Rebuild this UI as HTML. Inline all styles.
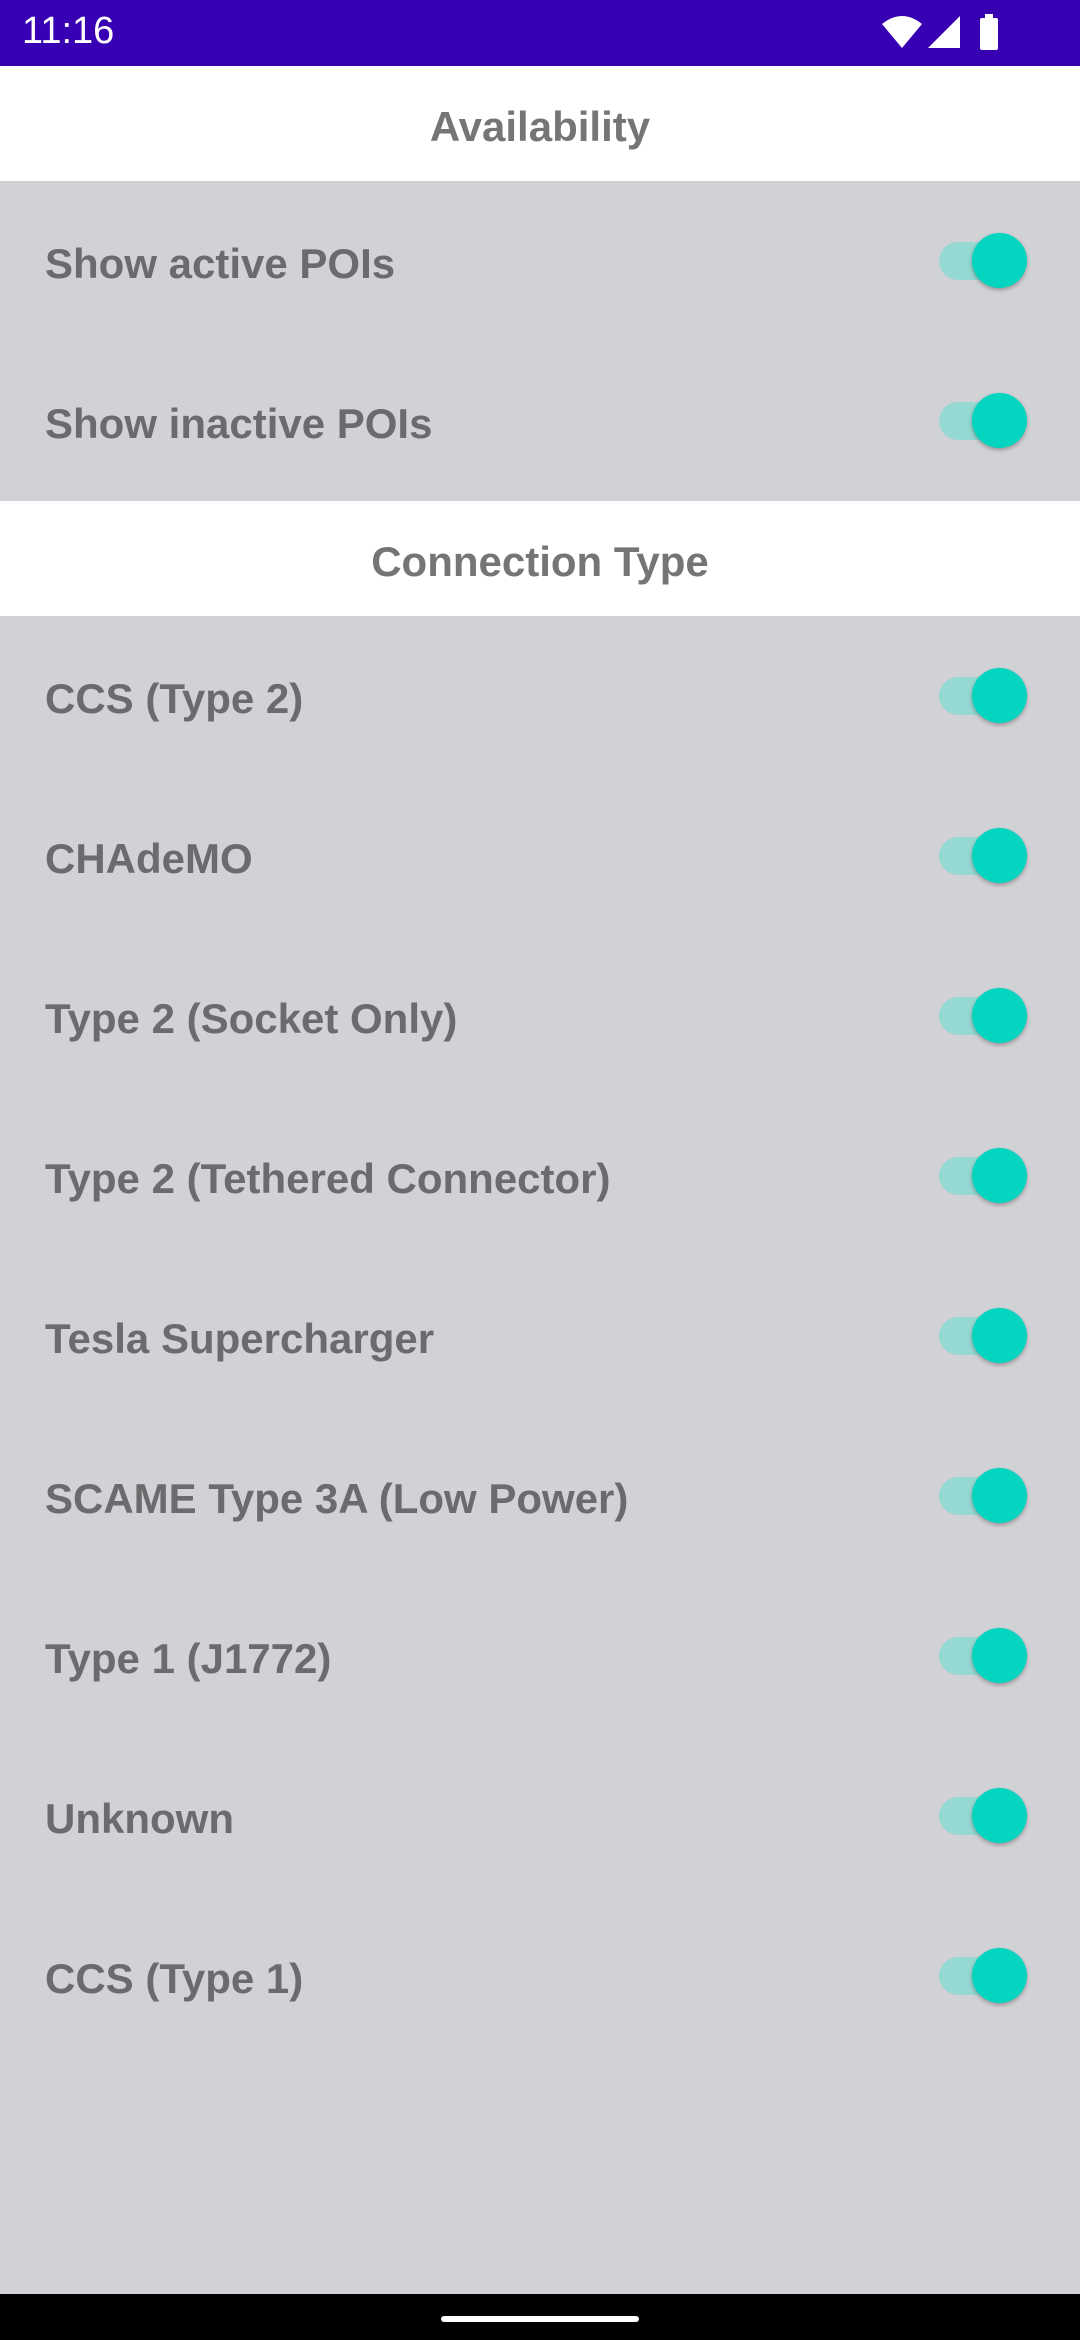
<!DOCTYPE html>
<html><head><meta charset="utf-8"><style>
*{margin:0;padding:0;box-sizing:border-box}
body{width:1080px;height:2340px;background:#d1d2d6;font-family:"Liberation Sans",Roboto,sans-serif;position:relative;overflow:hidden}
.sb{position:absolute;top:0;left:0;width:1080px;height:66px;background:#3700b3;color:#fff;font-size:38px}
.hdr{position:absolute;left:0;width:1080px;height:115px;background:#fff;color:#757575;font-weight:bold;font-size:42px;text-align:center;line-height:121px}
.row{position:absolute;left:0;width:1080px;height:160px}
.row span{position:absolute;left:45px;top:3px;line-height:160px;font-size:42px;font-weight:bold;color:#6b6b6d}
.tr{position:absolute;left:939px;top:61px;width:82px;height:38px;border-radius:19px;background:#96d8d2}
.th{position:absolute;left:972px;top:52px;width:55px;height:55px;border-radius:50%;background:#03d5c0;box-shadow:0 2px 4px rgba(0,0,0,.3)}
.nav{position:absolute;left:0;top:2294px;width:1080px;height:46px;background:#000}
.nav div{position:absolute;left:441px;top:22px;width:198px;height:6px;border-radius:3px;background:#fff}
</style></head><body>
<div class="sb"><span style="position:absolute;left:22px;top:10px">11:16</span>
<svg style="position:absolute;left:880px;top:14px" width="120" height="38" viewBox="0 0 120 38">
<path d="M2 10 Q22 -6 42 10 L22 34 Z" fill="#fff"/>
<path d="M48 34 L80 34 L80 2 Z" fill="#fff"/>
<rect x="100" y="4" width="18" height="32" rx="2" fill="#fff"/><rect x="105" y="0" width="8" height="5" fill="#fff"/>
</svg></div>
<div class="hdr" style="top:66px">Availability</div>
<div class="row" style="top:181px"><span>Show active POIs</span><div class="tr"></div><div class="th"></div></div>
<div class="row" style="top:341px"><span>Show inactive POIs</span><div class="tr"></div><div class="th"></div></div>
<div class="hdr" style="top:501px">Connection Type</div>
<div class="row" style="top:616px"><span>CCS (Type 2)</span><div class="tr"></div><div class="th"></div></div>
<div class="row" style="top:776px"><span>CHAdeMO</span><div class="tr"></div><div class="th"></div></div>
<div class="row" style="top:936px"><span>Type 2 (Socket Only)</span><div class="tr"></div><div class="th"></div></div>
<div class="row" style="top:1096px"><span>Type 2 (Tethered Connector)</span><div class="tr"></div><div class="th"></div></div>
<div class="row" style="top:1256px"><span>Tesla Supercharger</span><div class="tr"></div><div class="th"></div></div>
<div class="row" style="top:1416px"><span>SCAME Type 3A (Low Power)</span><div class="tr"></div><div class="th"></div></div>
<div class="row" style="top:1576px"><span>Type 1 (J1772)</span><div class="tr"></div><div class="th"></div></div>
<div class="row" style="top:1736px"><span>Unknown</span><div class="tr"></div><div class="th"></div></div>
<div class="row" style="top:1896px"><span>CCS (Type 1)</span><div class="tr"></div><div class="th"></div></div>
<div class="nav"><div></div></div>
</body></html>
